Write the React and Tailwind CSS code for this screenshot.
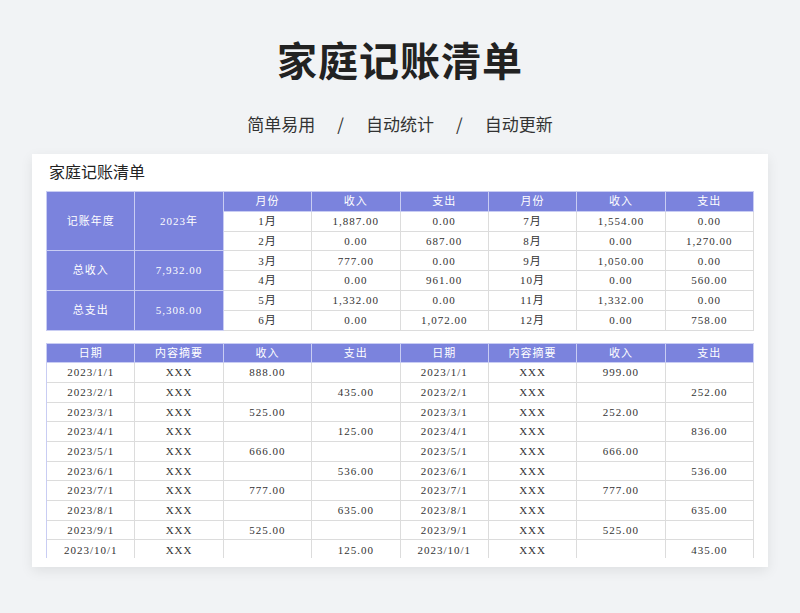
export default function App() {
  const F = { fontFamily: '"Liberation Serif","Noto Sans CJK SC",serif' };
  const months = [
    ["1月","1,887.00","0.00","7月","1,554.00","0.00"],
    ["2月","0.00","687.00","8月","0.00","1,270.00"],
    ["3月","777.00","0.00","9月","1,050.00","0.00"],
    ["4月","0.00","961.00","10月","0.00","560.00"],
    ["5月","1,332.00","0.00","11月","1,332.00","0.00"],
    ["6月","0.00","1,072.00","12月","0.00","758.00"],
  ];
  const rows = [
    ["2023/1/1","XXX","888.00","","2023/1/1","XXX","999.00",""],
    ["2023/2/1","XXX","","435.00","2023/2/1","XXX","","252.00"],
    ["2023/3/1","XXX","525.00","","2023/3/1","XXX","252.00",""],
    ["2023/4/1","XXX","","125.00","2023/4/1","XXX","","836.00"],
    ["2023/5/1","XXX","666.00","","2023/5/1","XXX","666.00",""],
    ["2023/6/1","XXX","","536.00","2023/6/1","XXX","","536.00"],
    ["2023/7/1","XXX","777.00","","2023/7/1","XXX","777.00",""],
    ["2023/8/1","XXX","","635.00","2023/8/1","XXX","","635.00"],
    ["2023/9/1","XXX","525.00","","2023/9/1","XXX","525.00",""],
    ["2023/10/1","XXX","","125.00","2023/10/1","XXX","","435.00"],
  ];
  const hd = "bg-[#7b83dd] text-white border-r border-b border-[#c9cdf3] flex items-center justify-center tracking-[1px]";
  const cell = "bg-white text-[#333] border-r border-b border-[#dcdcdc] flex items-center justify-center tracking-[1px]";
  return (
    <div className="w-[800px] h-[613px] bg-[#f1f3f5] flex flex-col items-center overflow-hidden" style={{fontFamily:'"Noto Sans CJK SC",sans-serif'}}>
      <div className="mt-[33px] text-[40px] leading-[52px] font-bold text-[#222] tracking-[1px]">家庭记账清单</div>
      <div className="mt-[27px] text-[17px] leading-[24px] text-[#333] flex gap-[22px]">
        <span>简单易用</span><span>/</span><span>自动统计</span><span>/</span><span>自动更新</span>
      </div>
      <div className="mt-[18px] w-[736px] h-[413px] bg-white shadow-[0_4px_12px_rgba(0,0,0,0.08)] pl-[14px] pt-[9px] overflow-hidden" style={F}>
        <div className="text-[16px] leading-[20px] text-[#222] ml-[3px] mb-[8px]" style={F}>家庭记账清单</div>
        <div className="grid grid-cols-8 w-[708px] text-[11px] border-l border-t border-[#c9cdf3]" style={{gridTemplateRows:"repeat(7,19.8px)"}}>
          <div className={hd + " row-span-3"}>记账年度</div>
          <div className={hd + " row-span-3"}>2023年</div>
          {["月份","收入","支出","月份","收入","支出"].map((t,i)=><div key={i} className={hd}>{t}</div>)}
          {months.map((r,ri)=>{
            const extra = [];
            if (ri===2) extra.push(<div key="a" className={hd+" row-span-2 col-start-1"}>总收入</div>,<div key="b" className={hd+" row-span-2"}>7,932.00</div>);
            if (ri===4) extra.push(<div key="a" className={hd+" row-span-2 col-start-1"}>总支出</div>,<div key="b" className={hd+" row-span-2"}>5,308.00</div>);
            return [...extra, ...r.map((t,i)=><div key={ri+"-"+i} className={cell + (i===0?" col-start-3":"")}>{t}</div>)];
          })}
        </div>
        <div className="h-[12px]" />
        <div className="h-[215px] overflow-hidden w-[708px]">
          <div className="grid grid-cols-8 w-[708px] text-[11px] border-l border-t border-[#c9cdf3]" style={{gridAutoRows:"19.7px"}}>
            {["日期","内容摘要","收入","支出","日期","内容摘要","收入","支出"].map((t,i)=><div key={i} className={hd}>{t}</div>)}
            {rows.flat().map((t,i)=><div key={i} className={cell}>{t}</div>)}
          </div>
        </div>
      </div>
    </div>
  );
}
